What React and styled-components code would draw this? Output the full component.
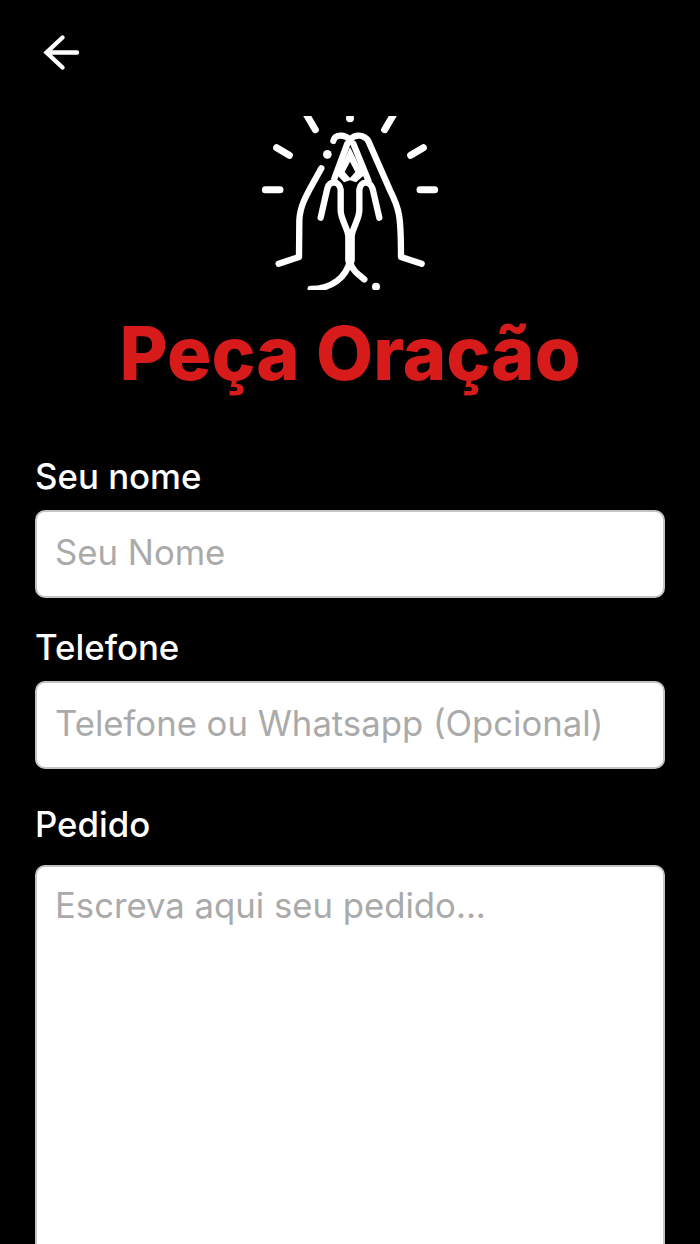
import React from 'react';
import styled, { createGlobalStyle } from 'styled-components';

const GlobalStyle = createGlobalStyle`
  html, body {
    margin: 0;
    padding: 0;
    background: #000;
  }
  * {
    box-sizing: border-box;
  }
`;

const Screen = styled.div`
  width: 700px;
  height: 1244px;
  overflow: hidden;
  background: #000;
  padding: 32px 35px 0;
  font-family: Inter, 'Liberation Sans', sans-serif;
`;

const BackButton = styled.button`
  display: block;
  width: 44px;
  height: 44px;
  padding: 0;
  margin-left: 5px;
  border: 0;
  background: none;
  color: #fff;
`;

const Hero = styled.div`
  display: flex;
  flex-direction: column;
  align-items: center;
  margin-top: 40px;
`;

const Title = styled.h1`
  margin: 23px 0 0;
  font-size: 74px;
  line-height: 80px;
  font-weight: 800;
  white-space: nowrap;
  color: #d71a1a;
`;

const Form = styled.form`
  display: flex;
  flex-direction: column;
  margin-top: 63px;
`;

const Field = styled.div`
  display: flex;
  flex-direction: column;
  gap: ${(p) => p.$gap}px;
  margin-bottom: ${(p) => p.$after}px;
`;

const Label = styled.label`
  font-size: 34.8px;
  line-height: 40px;
  font-weight: 500;
  color: #fff;
`;

const inputLook = `
  width: 100%;
  border: 2px solid #c4c4c4;
  border-radius: 10px;
  background: #fff;
  padding: 0 18px;
  font-family: Inter, 'Liberation Sans', sans-serif;
  font-size: 34.7px;
  color: #222;
  outline: none;
  &::placeholder {
    color: #aaaaaa;
    opacity: 1;
  }
`;

const Input = styled.input`
  ${inputLook}
  height: 88px;
  padding-bottom: 5px;
`;

const TextArea = styled.textarea`
  ${inputLook}
  height: 500px;
  padding-top: 18px;
  resize: none;
  line-height: 40px;
`;

function PrayingHands() {
  return (
    <svg width="220" height="174" viewBox="0 48 660 520" fill="none" stroke="#fff" strokeWidth="19" strokeLinecap="round" strokeLinejoin="round">
      <path d="M200 44L226 88M460 44L434 88M110 142L148 165M550 142L512 165M76 268H120M540 268H584" strokeWidth="21" />
      <circle cx="330" cy="54" r="12" fill="#fff" stroke="none" />
      <circle cx="262" cy="162" r="13" fill="#fff" stroke="none" />
      <circle cx="408" cy="559" r="12" fill="#fff" stroke="none" />
      {/* outer edges of both hands */}
      <path d="M244 204C205 275 180 310 178 360L177 470L116 490" />
      <path d="M280 122C284 102 312 100 330 118C345 100 372 102 385 122L450 270C478 325 483 345 483 470L545 490" />
      {/* inner A with its diamond gap */}
      <path d="M322 130L283 235M340 130L385 240" />
      <path d="M330 140L292 225L312 246L330 240L348 246L372 225Z" fill="#fff" stroke="none" />
      <path d="M330 184L314 215L330 233L346 215Z" fill="#000" stroke="none" />
      {/* fingers running down into the wrists */}
      <path d="M242 352L262 264C268 240 298 240 302 268V330C302 358 325 385 325 410V480" />
      <path d="M418 352L398 266C390 240 362 240 358 268V330C358 358 335 385 335 410V480" />
      <path d="M330 480C320 530 275 566 212 566M330 480C333 505 350 520 373 537" />
    </svg>
  );
}

export default function App() {
  return (
    <>
      <GlobalStyle />
      <Screen>
        <BackButton type="button" aria-label="Voltar">
          <svg width="44" height="44" viewBox="0 0 44 44" fill="none" stroke="currentColor" strokeWidth="4.4" strokeLinecap="round" strokeLinejoin="miter">
            <path d="M8 20.5H37M22.5 5.5L6.5 20.5L22.5 35.5" />
          </svg>
        </BackButton>
        <Hero>
          <PrayingHands />
          <Title>Peça Oração</Title>
        </Hero>
        <Form>
          <Field $gap={14} $after={29}>
            <Label>Seu nome</Label>
            <Input placeholder="Seu Nome" />
          </Field>
          <Field $gap={14} $after={35}>
            <Label>Telefone</Label>
            <Input placeholder="Telefone ou Whatsapp (Opcional)" />
          </Field>
          <Field $gap={21} $after={0}>
            <Label>Pedido</Label>
            <TextArea placeholder="Escreva aqui seu pedido..." />
          </Field>
        </Form>
      </Screen>
    </>
  );
}
